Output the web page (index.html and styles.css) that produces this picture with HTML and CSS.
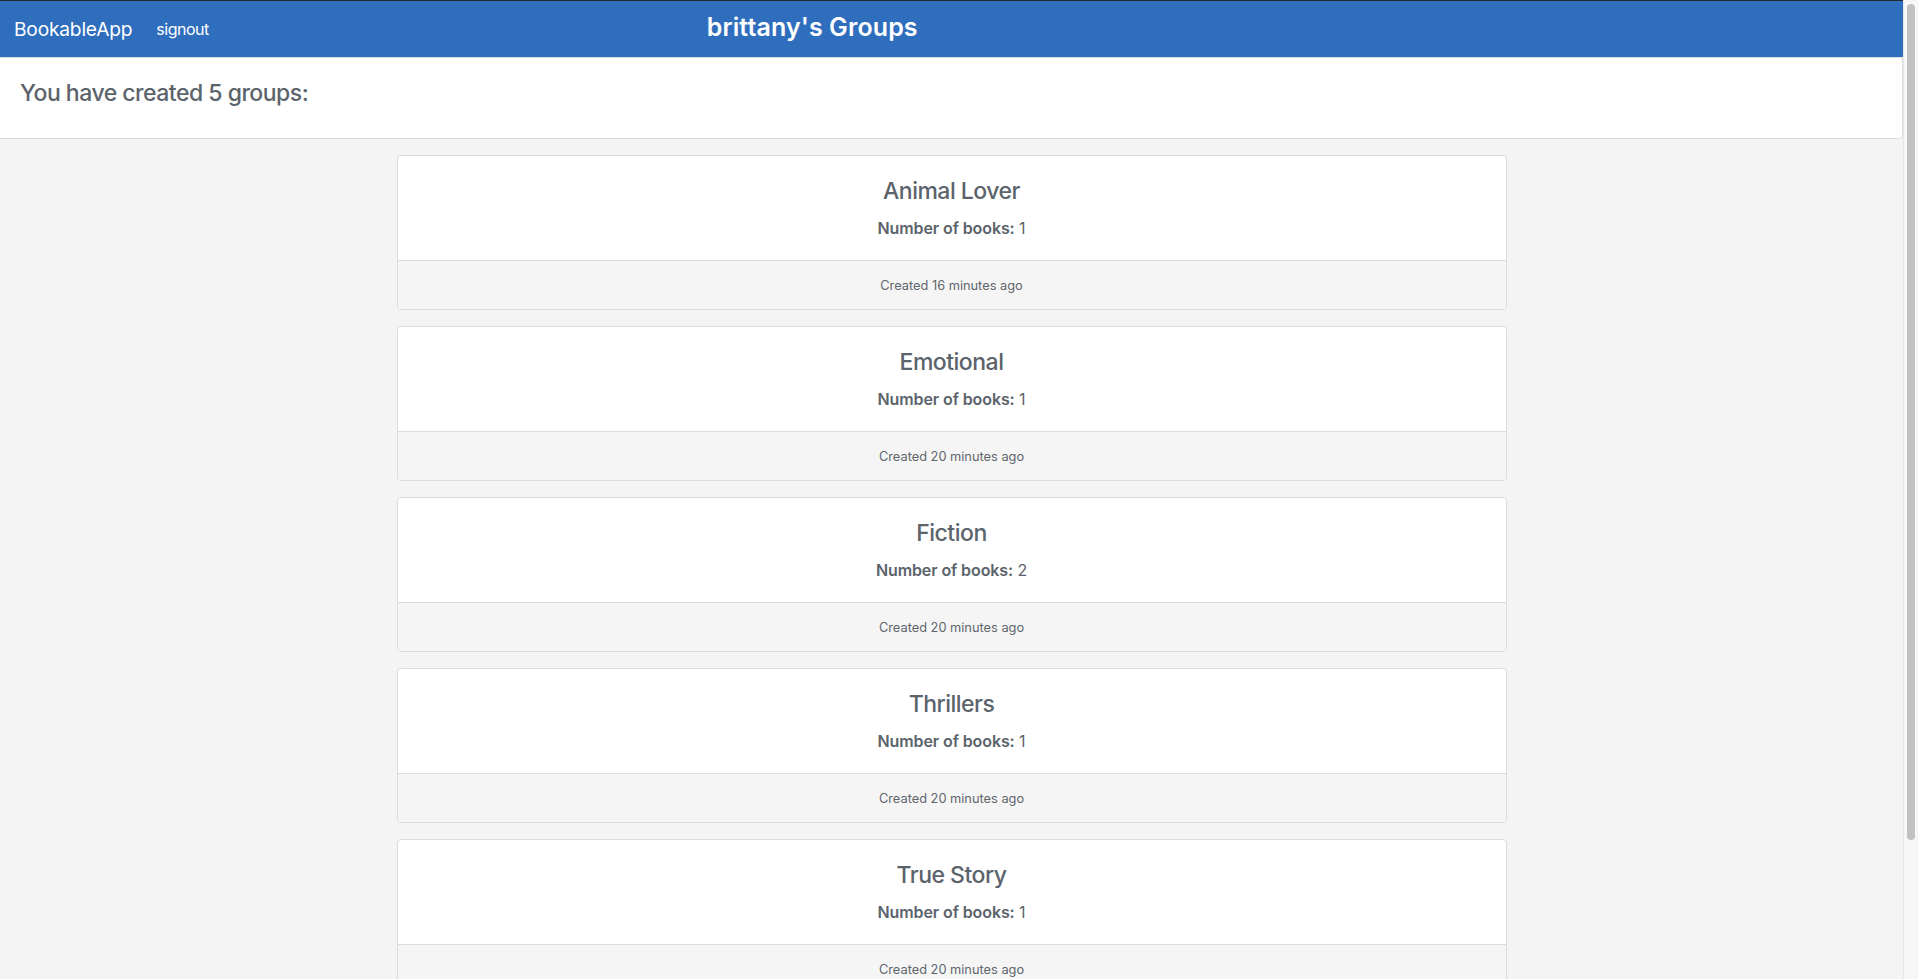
FILE: index.html
```html
<!DOCTYPE html>
<html lang="en">
<head>
<meta charset="utf-8">
<title>brittany's Groups</title>
<link rel="stylesheet" href="styles.css">
</head>
<body>
<div class="app">
  <div class="main">
    <nav class="navbar">
      <a class="brand" href="#">BookableApp</a>
      <a class="nav-link" href="#">signout</a>
      <h3 class="page-title">brittany's Groups</h3>
    </nav>
    <div class="summary">
      <h4 class="summary-title">You have created 5 groups:</h4>
    </div>
    <div class="container">
      <div class="card">
        <div class="card-body">
          <h4 class="card-title">Animal Lover</h4>
          <p class="card-text"><strong>Number of books:</strong> 1</p>
        </div>
        <div class="card-footer">Created 16 minutes ago</div>
      </div>
      <div class="card">
        <div class="card-body">
          <h4 class="card-title">Emotional</h4>
          <p class="card-text"><strong>Number of books:</strong> 1</p>
        </div>
        <div class="card-footer">Created 20 minutes ago</div>
      </div>
      <div class="card">
        <div class="card-body">
          <h4 class="card-title">Fiction</h4>
          <p class="card-text"><strong>Number of books:</strong> 2</p>
        </div>
        <div class="card-footer">Created 20 minutes ago</div>
      </div>
      <div class="card">
        <div class="card-body">
          <h4 class="card-title">Thrillers</h4>
          <p class="card-text"><strong>Number of books:</strong> 1</p>
        </div>
        <div class="card-footer">Created 20 minutes ago</div>
      </div>
      <div class="card">
        <div class="card-body">
          <h4 class="card-title">True Story</h4>
          <p class="card-text"><strong>Number of books:</strong> 1</p>
        </div>
        <div class="card-footer">Created 20 minutes ago</div>
      </div>
    </div>
  </div>
  <div class="scrollbar"><div class="thumb"></div></div>
</div>
</body>
</html>
```
FILE: styles.css
```css
* { box-sizing: border-box; }
html, body {
  margin: 0;
  height: 100%;
  overflow: hidden;
}
body {
  font-family: Inter, "Liberation Sans", Arial, sans-serif;
  font-size: 16px;
  line-height: 1.5;
  color: #212529;
  background: #f4f4f4;
}
.app {
  display: flex;
  height: 100%;
}
.main {
  flex: 1;
  min-width: 0;
  overflow: hidden;
}
.navbar {
  display: flex;
  align-items: center;
  height: 57px;
  border-top: 1px solid #26282b;
  background: #2f6dbd;
  padding: 0 16px 0 14px;
}
.brand {
  color: #fff;
  text-decoration: none;
  font-size: 19.2px;
  line-height: 30px;
  margin-right: 16px;
  letter-spacing: -0.2px;
}
.nav-link {
  color: #fff;
  text-decoration: none;
  font-size: 16px;
  line-height: 24px;
  padding: 0 8px;
  letter-spacing: -0.5px;
}
.page-title {
  margin: 0 0 4px 490px;
  color: #fff;
  font-size: 25px;
  font-weight: 600;
  line-height: 30px;
  letter-spacing: 0.1px;
}
.summary {
  background: #fff;
  border: 1px solid #dcdcdc;
  border-left: 0;
  border-radius: 0 4px 4px 0;
  padding: 21px 20px 31px;
}
.summary-title {
  margin: 0;
  color: #5b636b;
  font-size: 23px;
  font-weight: 500;
  line-height: 28px;
  letter-spacing: -0.5px;
}
.container {
  width: 1110px;
  margin: 16px auto 0;
}
.card {
  background: #fff;
  border: 1px solid #dcdcdc;
  border-radius: 4px;
  margin-bottom: 16px;
  text-align: center;
  overflow: hidden;
}
.card-body {
  padding: 21px 20px 20px;
}
.card-title {
  margin: 0 0 11px;
  color: #5b636b;
  font-size: 23px;
  font-weight: 500;
  line-height: 28px;
  letter-spacing: -0.5px;
}
.card-text {
  margin: 0;
  color: #5b636b;
  font-size: 16px;
  line-height: 24px;
  letter-spacing: -0.1px;
}
.card-text strong {
  font-weight: 600;
}
.card-footer {
  background: #f5f5f5;
  border-top: 1px solid #dcdcdc;
  padding: 13px 20px 11px;
  color: #5e656c;
  font-size: 12.8px;
  line-height: 24px;
}
.scrollbar {
  width: 15px;
  flex: none;
  background: #f7f7f7;
  border-left: 1px solid #e6e6e6;
  padding: 4px 3px 0 3px;
}
.thumb {
  height: 836px;
  border-radius: 4px;
  background: #c1c1c1;
}
```
